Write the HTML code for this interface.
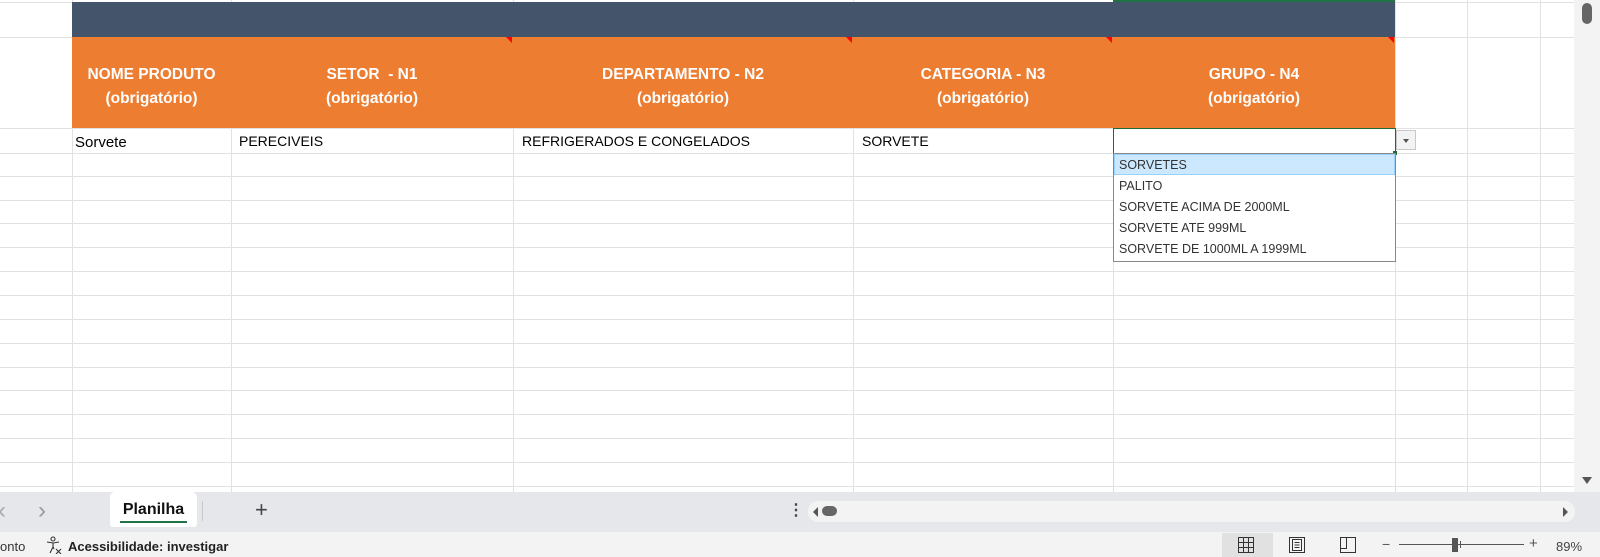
<!DOCTYPE html>
<html><head><meta charset="utf-8"><style>
*{margin:0;padding:0;box-sizing:border-box}
body{width:1600px;height:557px;overflow:hidden;background:#fff;font-family:"Liberation Sans",sans-serif;position:relative}
.a{position:absolute}
.v{position:absolute;top:0;width:1px;height:492px;background:#e1e1e1}
.h{position:absolute;left:0;height:1px;width:1574px;background:#e1e1e1}
.hd{position:absolute;top:37px;height:91px;color:#fff;font-weight:bold;font-size:15.5px;text-align:center;line-height:24px;padding-top:26px}
.tri{position:absolute;top:37px;width:0;height:0;border-top:6px solid #f00;border-left:6px solid transparent}
.c{position:absolute;top:130px;font-size:14px;color:#000;line-height:22px}
.it{position:absolute;left:1114px;width:280px;height:21px;font-size:12.5px;color:#333;padding-left:5px;line-height:21px}
</style></head><body>
<div class="v" style="left:72px"></div><div class="v" style="left:231px"></div><div class="v" style="left:513px"></div><div class="v" style="left:853px"></div><div class="v" style="left:1113px"></div><div class="v" style="left:1395px"></div><div class="v" style="left:1467px"></div><div class="v" style="left:1540px"></div>
<div class="h" style="top:2px"></div><div class="h" style="top:37px"></div><div class="h" style="top:128px"></div>
<div class="h" style="top:153px"></div><div class="h" style="top:176px"></div><div class="h" style="top:200px"></div><div class="h" style="top:223px"></div><div class="h" style="top:247px"></div><div class="h" style="top:271px"></div><div class="h" style="top:295px"></div><div class="h" style="top:319px"></div><div class="h" style="top:343px"></div><div class="h" style="top:367px"></div><div class="h" style="top:390px"></div><div class="h" style="top:414px"></div><div class="h" style="top:438px"></div><div class="h" style="top:462px"></div><div class="h" style="top:486px"></div>
<div class="a" style="left:72px;top:2px;width:1323px;height:35px;background:#44546a"></div>
<div class="a" style="left:1113px;top:0;width:282px;height:2px;background:#217346"></div>
<div class="a" style="left:72px;top:37px;width:1323px;height:91px;background:#ed7d31"></div>
<div class="hd" style="left:72px;width:159px">NOME PRODUTO<br>(obrigatório)</div>
<div class="hd" style="left:231px;width:282px">SETOR &nbsp;- N1<br>(obrigatório)</div>
<div class="hd" style="left:513px;width:340px">DEPARTAMENTO - N2<br>(obrigatório)</div>
<div class="hd" style="left:853px;width:260px">CATEGORIA - N3<br>(obrigatório)</div>
<div class="hd" style="left:1113px;width:282px">GRUPO - N4<br>(obrigatório)</div>
<div class="tri" style="left:506px"></div><div class="tri" style="left:846px"></div><div class="tri" style="left:1106px"></div><div class="tri" style="left:1388px"></div>
<div class="c" style="left:75px;top:132px;font-size:15px">Sorvete</div>
<div class="c" style="left:239px">PERECIVEIS</div>
<div class="c" style="left:522px">REFRIGERADOS E CONGELADOS</div>
<div class="c" style="left:862px">SORVETE</div>
<div class="a" style="left:1113px;top:128px;width:283px;height:26px;border:1.5px solid #1e6b35;background:#fff"></div>
<div class="a" style="left:1393px;top:151px;width:4px;height:4px;background:#1e6b35"></div>
<div class="a" style="left:1396px;top:130px;width:20px;height:20px;border:1px solid #c8c8c8;background:#f3f3f3"></div>
<div class="a" style="left:1403px;top:139px;border-top:4px solid #555;border-left:3.5px solid transparent;border-right:3.5px solid transparent"></div>
<div class="a" style="left:1113px;top:153px;width:283px;height:109px;border:1px solid #888;background:#fff"></div>
<div class="a" style="left:1114px;top:154px;width:281px;height:21px;background:#cce8ff;border:1px solid #99d1ff"></div>
<div class="it" style="top:155px">SORVETES</div>
<div class="it" style="top:176px">PALITO</div>
<div class="it" style="top:197px">SORVETE ACIMA DE 2000ML</div>
<div class="it" style="top:218px">SORVETE ATE 999ML</div>
<div class="it" style="top:239px">SORVETE DE 1000ML A 1999ML</div>
<div class="a" style="left:1574px;top:0;width:26px;height:492px;background:#f3f3f3"></div>
<div class="a" style="left:1582px;top:3px;width:10px;height:21px;border-radius:5px;background:#666"></div>
<div class="a" style="left:1582px;top:477px;border-top:7px solid #555;border-left:5px solid transparent;border-right:5px solid transparent"></div>
<div class="a" style="left:0;top:492px;width:1600px;height:40px;background:#e6e7ea"></div>
<div class="a" style="left:-2px;top:497px;color:#aaa;font-size:24px">&lsaquo;</div>
<div class="a" style="left:38px;top:497px;color:#999;font-size:24px">&rsaquo;</div>
<div class="a" style="left:110px;top:492px;width:87px;height:35px;background:#fff;border-radius:5px 5px 3px 3px"></div>
<div class="a" style="left:110px;top:501px;width:87px;text-align:center;font-weight:bold;font-size:16px;color:#111">Planilha</div>
<div class="a" style="left:120px;top:521px;width:67px;height:2px;background:#217346"></div>
<div class="a" style="left:202px;top:501px;width:1px;height:20px;background:#c8c8c8"></div>
<div class="a" style="left:255px;top:497px;font-size:22px;color:#444">+</div>
<div class="a" style="left:788px;top:500px;font-size:16px;color:#444;font-weight:bold">&#8942;</div>
<div class="a" style="left:808px;top:501px;width:767px;height:21px;border-radius:10px;background:#f3f3f3"></div>
<div class="a" style="left:813px;top:507px;border-right:5px solid #555;border-top:5px solid transparent;border-bottom:5px solid transparent"></div>
<div class="a" style="left:822px;top:506px;width:15px;height:10px;border-radius:5px;background:#666"></div>
<div class="a" style="left:1563px;top:507px;border-left:5px solid #555;border-top:5px solid transparent;border-bottom:5px solid transparent"></div>
<div class="a" style="left:0;top:532px;width:1600px;height:25px;background:#f3f3f3"></div>
<div class="a" style="left:0;top:539px;font-size:13px;color:#333">onto</div>
<svg class="a" style="left:45px;top:536px" width="18" height="18" viewBox="0 0 18 18" fill="none" stroke="#333" stroke-width="1.1"><circle cx="8" cy="3" r="2"/><path d="M2 6 L8 7 L14 6 M8 7 V11 L5 17 M8 11 L9 13"/><path d="M11 13 L16 18 M16 13 L11 18"/></svg>
<div class="a" style="left:68px;top:539px;font-size:13px;font-weight:bold;color:#222">Acessibilidade: investigar</div>
<div class="a" style="left:1222px;top:533px;width:51px;height:24px;background:#e1e1e1"></div>
<svg class="a" style="left:1237px;top:536px" width="18" height="18" viewBox="0 0 18 18" fill="none" stroke="#333"><path d="M1.5 1.5h15v15h-15z M1.5 6.5h15 M1.5 11.5h15 M6.5 1.5v15 M11.5 1.5v15"/></svg>
<svg class="a" style="left:1288px;top:536px" width="18" height="18" viewBox="0 0 18 18" fill="none" stroke="#333"><path d="M1.5 1.5h15v15h-15z M4.5 3.5h9v11h-9z M6.5 6.5h5 M6.5 9h5 M6.5 11.5h5"/></svg>
<svg class="a" style="left:1339px;top:536px" width="18" height="18" viewBox="0 0 18 18" fill="none" stroke="#333"><path d="M1.5 1.5h15v15h-15z M1.5 12.5h6v-11"/></svg>
<div class="a" style="left:1382px;top:536px;font-size:14px;color:#555">&minus;</div>
<div class="a" style="left:1399px;top:544px;width:125px;height:1px;background:#555"></div>
<div class="a" style="left:1452px;top:538px;width:6px;height:14px;background:#555"></div>
<div class="a" style="left:1460px;top:541px;width:1px;height:7px;background:#555"></div>
<div class="a" style="left:1529px;top:535px;font-size:15px;color:#555">+</div>
<div class="a" style="left:1556px;top:539px;font-size:13px;color:#444">89%</div>
</body></html>
